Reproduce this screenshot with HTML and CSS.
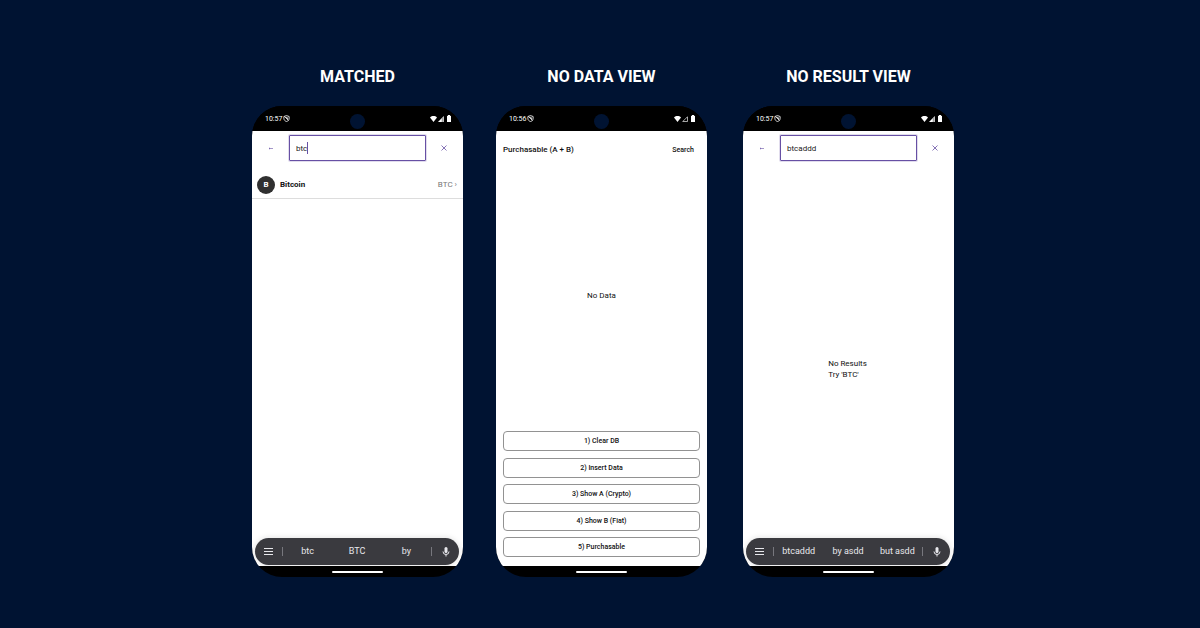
FILE: index.html
```html
<!DOCTYPE html>
<html lang="en">
<head>
<meta charset="utf-8">
<meta name="viewport" content="width=device-width, initial-scale=1">
<title>Search states</title>
<link rel="stylesheet" href="styles.css">
</head>
<body>
<svg width="0" height="0" class="defs" aria-hidden="true">
  <symbol id="blocked" viewBox="0 0 12 12"><path d="M6 1 10.500 2.600V6C10.500 8.500 8.500 10.500 6 11.200 3.500 10.500 1.500 8.500 1.500 6V2.600ZM2.500 2.500 9.500 9.500M5 3.500 8 5V7" fill="none" stroke="currentColor" stroke-width="1.400"/></symbol>
  <symbol id="wifi" viewBox="0 0 14 12"><path d="M0 3C4-.7 10-.7 14 3L7 12Z" fill="currentColor"/></symbol>
  <symbol id="signal-full" viewBox="0 0 12 12"><path d="M11.500 0V12H0Z" fill="currentColor"/><path d="M8.500 3V12" stroke="#000"/></symbol>
  <symbol id="signal-empty" viewBox="0 0 12 12"><path d="M11 1.500V11H1.500Z" fill="none" stroke="currentColor" stroke-width="1.300"/></symbol>
  <symbol id="battery" viewBox="0 0 8 14"><path d="M2 0H6V1.500H7Q8 1.500 8 2.500V13Q8 14 7 14H1Q0 14 0 13V2.500Q0 1.500 1 1.500H2Z" fill="currentColor"/></symbol>
  <symbol id="back" viewBox="0 0 6 6"><path d="M1 3.500H5M2 2.800 1 3.500 2 4.200" fill="none" stroke="currentColor" stroke-width=".6"/></symbol>
  <symbol id="close" viewBox="0 0 6 6"><path d="M.5.5 5.500 5.500M5.500.5.500 5.500" stroke="currentColor" stroke-width=".8"/></symbol>
  <symbol id="menu" viewBox="0 0 9 7"><path d="M0 .5H9M0 3.500H9M0 6.500H9" stroke="currentColor"/></symbol>
  <symbol id="mic" viewBox="0 0 8 10"><rect x="2.500" y="0" width="3" height="6" rx="1.500" fill="currentColor"/><path d="M1 4.500A3 3 0 0 0 7 4.500M4 7.500V9.500" fill="none" stroke="currentColor"/></symbol>
</svg>
<main class="board">
  <section class="sample">
    <h2 class="title">MATCHED</h2>
    <div class="phone">
      <header class="status"><span>10:57</span><svg class="shield"><use href="#blocked"/></svg><i class="camera"></i><svg class="wifi"><use href="#wifi"/></svg><svg class="signal"><use href="#signal-full"/></svg><svg class="battery"><use href="#battery"/></svg></header>
      <div class="screen">
        <form class="search">
          <button type="button" class="icon-button" aria-label="Back"><svg class="glyph"><use href="#back"/></svg></button>
          <label class="field"><input type="text" value="btc" aria-label="Search currencies"><i class="caret"></i></label>
          <button type="button" class="icon-button" aria-label="Clear"><svg class="glyph"><use href="#close"/></svg></button>
        </form>
        <a class="coin" href="#bitcoin"><span class="avatar">B</span><span class="coin-name">Bitcoin</span><span class="coin-code">BTC</span><span class="chevron">›</span></a>
        <div class="suggestions">
          <button type="button" class="tool" aria-label="Menu"><svg class="menu"><use href="#menu"/></svg></button>
          <div class="words"><button type="button">btc</button><button type="button">BTC</button><button type="button">by</button></div>
          <button type="button" class="tool" aria-label="Voice input"><svg class="mic"><use href="#mic"/></svg></button>
        </div>
      </div>
      <div class="nav"><i class="handle"></i></div>
    </div>
  </section>

  <section class="sample">
    <h2 class="title">NO DATA VIEW</h2>
    <div class="phone">
      <header class="status"><span>10:56</span><svg class="shield"><use href="#blocked"/></svg><i class="camera"></i><svg class="wifi"><use href="#wifi"/></svg><svg class="signal"><use href="#signal-empty"/></svg><svg class="battery"><use href="#battery"/></svg></header>
      <div class="screen">
        <div class="heading"><h3>Purchasable (A + B)</h3><button type="button">Search</button></div>
        <p class="empty">No Data</p>
        <div class="actions">
          <button type="button">1) Clear DB</button>
          <button type="button">2) Insert Data</button>
          <button type="button">3) Show A (Crypto)</button>
          <button type="button">4) Show B (Fiat)</button>
          <button type="button">5) Purchasable</button>
        </div>
      </div>
      <div class="nav"><i class="handle"></i></div>
    </div>
  </section>

  <section class="sample">
    <h2 class="title">NO RESULT VIEW</h2>
    <div class="phone">
      <header class="status"><span>10:57</span><svg class="shield"><use href="#blocked"/></svg><i class="camera"></i><svg class="wifi"><use href="#wifi"/></svg><svg class="signal"><use href="#signal-full"/></svg><svg class="battery"><use href="#battery"/></svg></header>
      <div class="screen">
        <form class="search">
          <button type="button" class="icon-button" aria-label="Back"><svg class="glyph"><use href="#back"/></svg></button>
          <label class="field"><input type="text" value="btcaddd" aria-label="Search currencies"></label>
          <button type="button" class="icon-button" aria-label="Clear"><svg class="glyph"><use href="#close"/></svg></button>
        </form>
        <p class="no-results">No Results<br>Try 'BTC'</p>
        <div class="suggestions">
          <button type="button" class="tool" aria-label="Menu"><svg class="menu"><use href="#menu"/></svg></button>
          <div class="words"><button type="button">btcaddd</button><button type="button">by asdd</button><button type="button">but asdd</button></div>
          <button type="button" class="tool" aria-label="Voice input"><svg class="mic"><use href="#mic"/></svg></button>
        </div>
      </div>
      <div class="nav"><i class="handle"></i></div>
    </div>
  </section>
</main>
</body>
</html>
```
FILE: styles.css
```css
* { box-sizing: border-box; }
body { margin: 0; min-height: 100vh; background: #001332; color: #111; font-family: Roboto, "Liberation Sans", sans-serif; font-size: 8px; }
h2, h3, p { margin: 0; }
button { padding: 0; border: 0; background: none; color: inherit; font: inherit; white-space: nowrap; }
svg { display: block; flex: none; }
.defs { position: absolute; }

.board { display: grid; grid-template-columns: 211fr 33fr 211fr 36fr 211fr; padding: 64px 20.5% 48px 21%; }
.sample { display: flex; flex-direction: column; min-width: 0; }
.sample:nth-child(2) { grid-column: 3; }
.sample:nth-child(3) { grid-column: 5; }
.title { height: 42px; color: #fff; font: 700 16px/26px Roboto, sans-serif; text-align: center; white-space: nowrap; }

.phone { display: flex; flex-direction: column; height: 75vh; min-height: 400px; border-radius: 30px; overflow: hidden; background: #000; }
.status { position: relative; display: flex; align-items: center; gap: 1px; height: 25px; flex: none; padding: 0 12px 0 13px; background: #000; color: #fff; font-size: 7px; }
.camera { position: absolute; top: 8px; left: 50%; width: 15px; height: 15px; margin-left: -8px; border-radius: 50%; background: #001332; }
.shield { width: 7px; height: 7px; }
.wifi { width: 7px; height: 6px; margin-left: auto; }
.signal { width: 6px; height: 6px; }
.battery { width: 4px; height: 7px; margin-left: 2px; }
.screen { flex: 1; display: flex; flex-direction: column; min-height: 0; background: #fff; }
.nav { flex: none; display: grid; place-items: center; height: 11px; }
.handle { width: 51px; height: 2px; border-radius: 1px; background: #fff; }

.search { display: flex; padding-top: 4px; }
.icon-button { display: grid; place-items: center; width: 37px; flex: none; color: #6750a4; }
.icon-button:last-child { padding-right: 2px; }
.glyph { width: 6px; height: 6px; }
.field { position: relative; flex: 1; min-width: 0; }
.field input { display: block; width: 100%; height: 26px; padding: 0 6px; border: 1px solid #6750a4; border-radius: 1px; outline: 0; background: #fff; box-shadow: 0 0 0 1px #6750a433; color: #222; font: inherit; }
.caret { position: absolute; left: 18px; top: 7px; width: 1px; height: 12px; background: #6750a4; }
.coin { display: flex; align-items: center; height: 28px; margin-top: 10px; padding: 0 6px 0 5px; border-bottom: 1px solid #ddd; color: #111; text-decoration: none; }
.avatar { display: grid; place-items: center; width: 18px; height: 18px; margin-right: 5px; border-radius: 50%; background: #303030; color: #fff; font-weight: 700; }
.coin-name { font-weight: 700; }
.coin-code { margin-left: auto; color: #777; }
.chevron { margin-left: 2px; color: #777; }

.suggestions { display: flex; height: 27px; margin: auto 4px 1px 3px; border-radius: 14px; background: #3a3a3f; color: #e8e8ec; font-size: 9px; box-shadow: 0 0 6px #0002; }
.tool { display: grid; place-items: center; width: 27px; flex: none; }
.words { flex: 1; display: grid; grid-template-columns: repeat(3, 1fr); height: 9px; align-self: center; border: 1px solid #77777d; border-width: 0 1px; }
.words button { line-height: 9px; }
.menu { width: 9px; height: 7px; }
.mic { width: 8px; height: 10px; }

.heading { display: flex; align-items: center; justify-content: space-between; height: 37px; flex: none; padding: 0 13px 0 7px; }
.heading h3 { font-size: 8px; font-weight: 500; }
.heading button { font-size: 7px; font-weight: 500; }
.empty { flex: 1; display: grid; place-items: center; padding-bottom: 8px; }
.actions { display: flex; flex-direction: column; justify-content: space-between; height: 126px; flex: none; margin: 0 7px 9px; }
.actions button { height: 20px; border: 1px solid #929292; border-radius: 4px; font-size: 7px; font-weight: 500; }
.no-results { flex: 1; display: grid; place-content: center; padding: 38px 2px 0 0; line-height: 11px; }
```
